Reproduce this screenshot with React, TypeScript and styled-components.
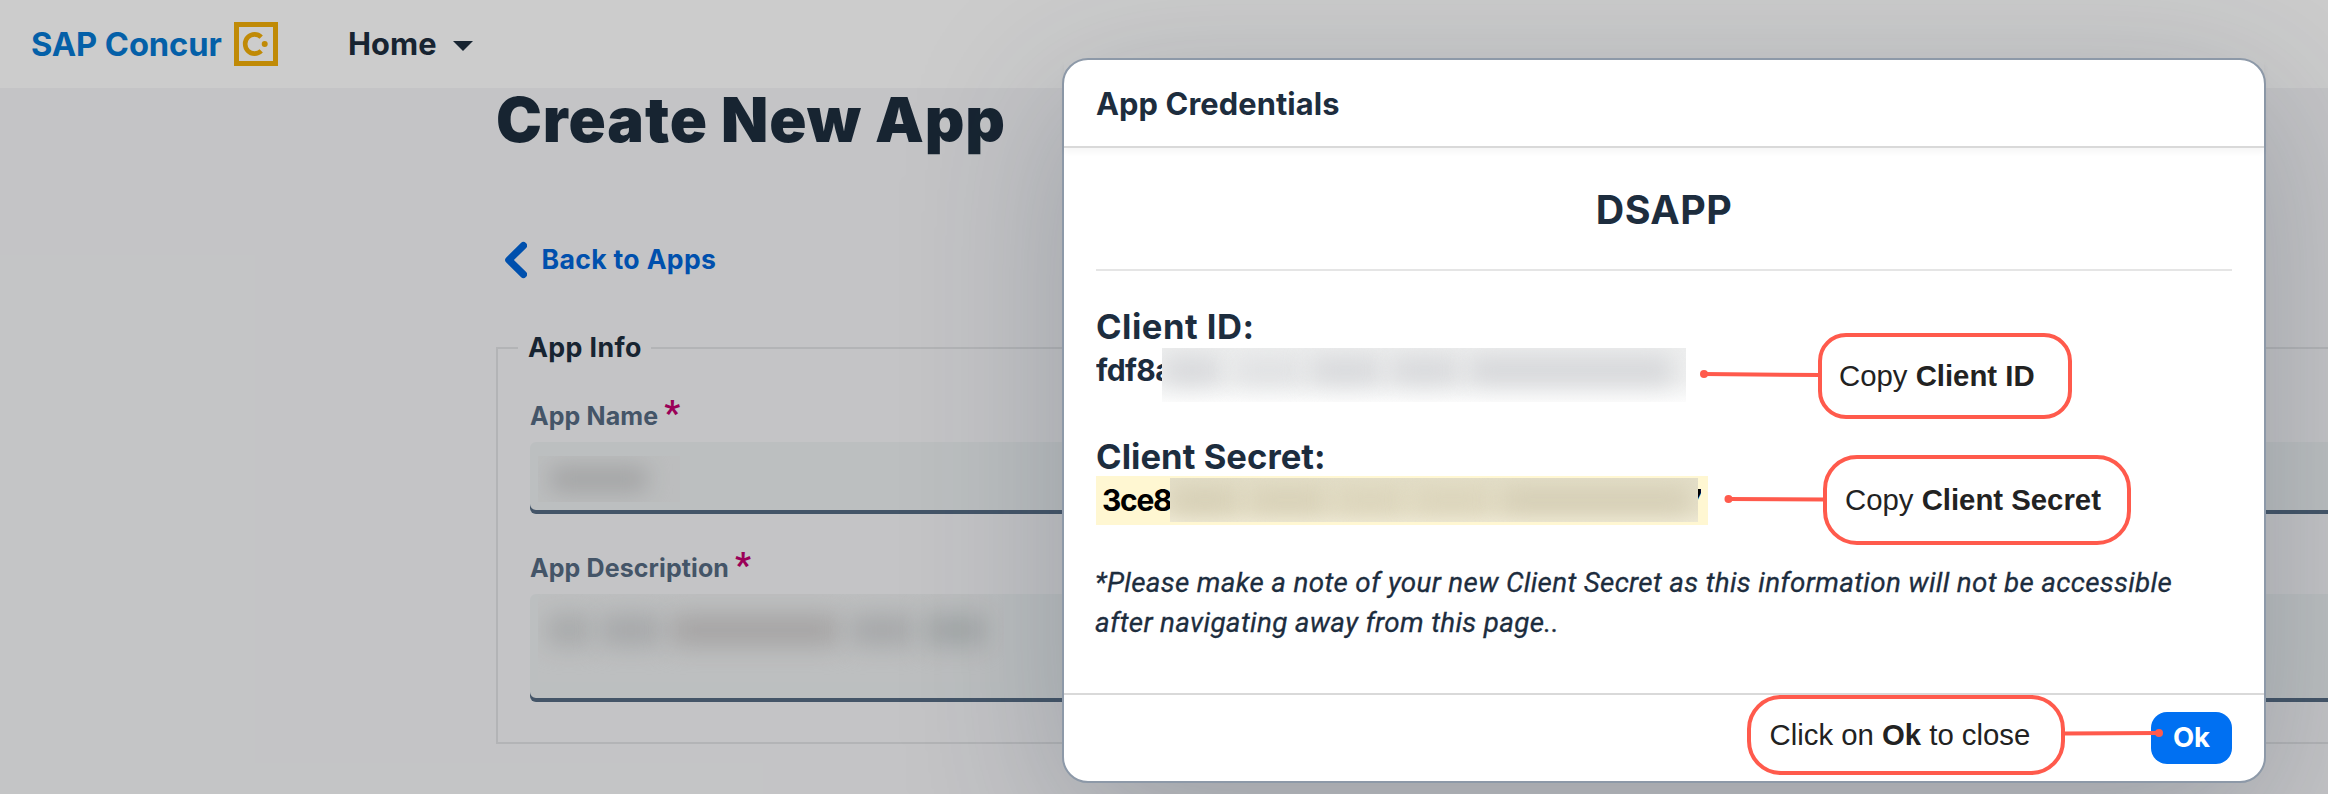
import React from 'react';
import styled, { createGlobalStyle } from 'styled-components';

const GlobalStyle = createGlobalStyle`
  * { box-sizing: border-box; }
  body {
    margin: 0;
    font-family: Inter, "Noto Sans", sans-serif;
    color: #1d2d3e;
    overflow: hidden;
  }
`;

const Page = styled.div`
  position: relative;
  width: 2328px;
  height: 794px;
  overflow: hidden;
  background: #f5f6f8;
  white-space: nowrap;
`;

/* ---------- top bar ---------- */

const TopBar = styled.header`
  display: flex;
  align-items: center;
  height: 88px;
  padding-left: 31px;
  background: #fff;
`;

const Brand = styled.div`
  width: 203px;
  font-size: 32.7px;
  font-weight: 700;
  line-height: 40px;
  letter-spacing: -0.1px;
  color: #0578d3;
`;

const BrandMark = styled.svg`
  display: block;
  width: 44px;
  height: 44px;
`;

const HomeMenu = styled.div`
  display: flex;
  align-items: center;
  gap: 16px;
  margin-left: 70px;
  font-size: 30.8px;
  font-weight: 700;
  line-height: 40px;
  letter-spacing: 0.1px;

  svg {
    display: block;
    margin-top: 4px;
  }
`;

/* ---------- page content ---------- */

const Main = styled.main`
  display: flex;
  flex-direction: column;
  width: 2000px;
  margin-left: 496px;
`;

const PageTitle = styled.h1`
  margin: 0 0 91.5px 0;
  padding-top: 2.5px;
  font-size: 61.5px;
  font-weight: 900;
  line-height: 58px;
  letter-spacing: 0.9px;
`;

const BackLink = styled.a`
  display: flex;
  align-items: flex-start;
  gap: 14.5px;
  height: 40px;
  padding-left: 8px;
  margin-bottom: 67px;
  font-size: 26.6px;
  font-weight: 700;
  line-height: 38px;
  letter-spacing: 0.33px;
  color: #0064d9;

  svg {
    display: block;
  }
`;

const LegendRow = styled.div`
  display: flex;
  align-items: center;
  height: 2px;
`;

const Rule = styled.div<{ $width?: number }>`
  height: 2px;
  background: #e0e2e4;
  ${p => (p.$width ? `width: ${p.$width}px;` : 'flex: 1;')}
`;

const Legend = styled.div`
  width: 133px;
  padding: 0 0 2px 10px;
  font-size: 26.8px;
  font-weight: 700;
  line-height: 40px;
  letter-spacing: 0.35px;
`;

const FieldGroup = styled.section`
  display: flex;
  flex-direction: column;
  height: 395px;
  padding: 46px 0 0 32px;
  border-left: 2px solid #e0e2e4;
  border-bottom: 2px solid #e0e2e4;
`;

const Label = styled.label`
  display: flex;
  align-items: baseline;
  gap: 6px;
  height: 40px;
  margin-bottom: 7px;
  font-size: 25px;
  font-weight: 700;
  line-height: 43px;
  letter-spacing: 0.1px;
  color: #556b82;
`;

const Required = styled.span`
  font-family: Roboto, sans-serif;
  font-size: 35px;
  font-weight: 700;
  line-height: 20px;
  color: #c2006e;
`;

const Input = styled.div<{ $height: number; $pad: string }>`
  height: ${p => p.$height}px;
  padding: ${p => p.$pad};
  margin-bottom: 33px;
  border-radius: 6px;
  background: #eceff1;
  box-shadow: inset 0 -4px 0 #556b82;
`;

/* ---------- blurred-out values ---------- */

const Redacted = styled.div<{ $width: number; $height: number; $bg: string; $pad: string }>`
  flex: none;
  display: flex;
  width: ${p => p.$width}px;
  height: ${p => p.$height}px;
  padding: ${p => p.$pad};
  overflow: hidden;
  background: ${p => p.$bg};
`;

const Smudge = styled.div<{ $width: number; $color: string; $blur: number; $gap?: number }>`
  flex: none;
  width: ${p => p.$width}px;
  height: 100%;
  margin-right: ${p => p.$gap ?? 0}px;
  border-radius: 8px;
  background: ${p => p.$color};
  filter: blur(${p => p.$blur}px);
`;

const Backdrop = styled.div`
  position: absolute;
  inset: 0;
  background: rgba(0, 0, 0, 0.2);
`;

/* ---------- dialog ---------- */

const Dialog = styled.div`
  position: absolute;
  left: 1062px;
  top: 58px;
  display: flex;
  flex-direction: column;
  width: 1204px;
  height: 725px;
  border: 2px solid #8d99a8;
  border-radius: 26px;
  background: #fff;
  box-shadow: 0 40px 155px rgba(34, 53, 72, 0.25);
`;

const DialogHeader = styled.div`
  height: 88px;
  padding-left: 32px;
  border-bottom: 2px solid #d9d9d9;
  box-shadow: 0 4px 6px rgba(0, 0, 0, 0.04);
  font-size: 30.8px;
  font-weight: 700;
  line-height: 87px;
  letter-spacing: 0.1px;
`;

const DialogBody = styled.div`
  display: flex;
  flex-direction: column;
  height: 545px;
  padding: 37px 32px 0;
`;

const AppName = styled.h2`
  margin: 0;
  padding-bottom: 34px;
  border-bottom: 2px solid #e5e5e5;
  font-size: 39.4px;
  font-weight: 700;
  line-height: 50px;
  letter-spacing: 0.5px;
  text-align: center;
`;

const FieldTitle = styled.h3<{ $top: number; $line: number; $spacing: number }>`
  margin: ${p => p.$top}px 0 0;
  font-size: 34.6px;
  font-weight: 700;
  line-height: ${p => p.$line}px;
  letter-spacing: ${p => p.$spacing}px;
`;

const ClientId = styled.div`
  display: flex;
  height: 54px;
  font-size: 30px;
  font-weight: 700;
  line-height: 44px;
  letter-spacing: -0.6px;
`;

const ClientSecret = styled.div`
  display: flex;
  width: 612px;
  height: 49px;
  padding-left: 6px;
  background: #fff7d2;
  color: #000;
  font-size: 30px;
  font-weight: 700;
  line-height: 48px;
  letter-spacing: -1.3px;
`;

const Clip = styled.span<{ $width: number; $end?: boolean }>`
  display: flex;
  justify-content: ${p => (p.$end ? 'flex-end' : 'flex-start')};
  flex: none;
  width: ${p => p.$width}px;
  overflow: hidden;
`;

const SecretMask = styled.div`
  padding-top: 2px;
`;

const Note = styled.p`
  margin: 37.5px 0 0 -1px;
  font-family: Roboto, "Noto Sans", sans-serif;
  font-size: 27.8px;
  font-style: italic;
  line-height: 40px;
  letter-spacing: 0.33px;
  -webkit-text-stroke: 0.3px #1d2d3e;
`;

const DialogFooter = styled.div`
  display: flex;
  justify-content: flex-end;
  flex: 1;
  padding: 17px 32px 0;
  border-top: 2px solid #d9d9d9;
`;

const OkButton = styled.button`
  width: 81px;
  height: 52px;
  padding: 0 0 2px;
  border: 0;
  border-radius: 16px;
  background: #0070f2;
  color: #fff;
  font-family: inherit;
  font-size: 27.5px;
  font-weight: 700;
  line-height: 50px;
`;

/* ---------- annotations ---------- */

const Callout = styled.div<{ $x: number; $y: number; $w: number; $h: number; $r: number; $pad: number }>`
  position: absolute;
  left: ${p => p.$x}px;
  top: ${p => p.$y}px;
  display: flex;
  align-items: center;
  width: ${p => p.$w}px;
  height: ${p => p.$h}px;
  padding-left: ${p => p.$pad}px;
  border: 4px solid #ff5a4c;
  border-radius: ${p => p.$r}px;
  background: #fff;
  color: #222;
  font-family: "Liberation Sans", Arial, sans-serif;
  font-size: 29.33px;
  white-space: pre;
`;

const Connectors = styled.svg`
  position: absolute;
  inset: 0;
`;

const Connector = ({ dot, end }: { dot: [number, number]; end: [number, number] }) => (
  <g stroke="#ff5a4c" fill="#ff5a4c">
    <line x1={dot[0]} y1={dot[1]} x2={end[0]} y2={end[1]} strokeWidth="4" />
    <circle cx={dot[0]} cy={dot[1]} r="4" stroke="none" />
  </g>
);

export default function App() {
  return (
    <Page>
      <GlobalStyle />
      <TopBar>
        <Brand>SAP Concur</Brand>
        <BrandMark viewBox="0 0 44 44" fill="none">
          <rect x="2.5" y="2.5" width="39" height="39" stroke="#f0ad08" strokeWidth="5" />
          <path d="M27.2 15.2 A9.4 9.6 0 1 0 27.2 28.8" stroke="#f0ad08" strokeWidth="4.6" />
          <circle cx="30.7" cy="22" r="3" fill="#f0ad08" />
        </BrandMark>
        <HomeMenu>
          Home
          <svg width="20" height="10" viewBox="0 0 20 10">
            <path d="M0 0H20L10 10Z" fill="#1d2d3e" />
          </svg>
        </HomeMenu>
      </TopBar>

      <Main>
        <PageTitle>Create New App</PageTitle>
        <BackLink>
          <svg width="23" height="40" viewBox="0 0 23 40" fill="none">
            <path d="M19.4 5.6L4.8 20L19.4 34.4" stroke="#0064d9" strokeWidth="7.2" strokeLinecap="round" strokeLinejoin="round" />
          </svg>
          Back to Apps
        </BackLink>
        <LegendRow>
          <Rule $width={22} />
          <Legend>App Info</Legend>
          <Rule />
        </LegendRow>
        <FieldGroup>
          <Label>App Name <Required>*</Required></Label>
          <Input $height={72} $pad="14px 8px">
            <Redacted $width={142} $height={46} $bg="#ebedee" $pad="10px 12px">
              <Smudge $width={98} $color="#cdcecf" $blur={11} />
            </Redacted>
          </Input>
          <Label>App Description <Required>*</Required></Label>
          <Input $height={108} $pad="0 8px">
            <Redacted $width={466} $height={88} $bg="#edeff0" $pad="20px 8px 36px">
              <Smudge $width={46} $color="#d2d4d5" $blur={12} $gap={8} />
              <Smudge $width={62} $color="#d0d2d4" $blur={12} $gap={8} />
              <Smudge $width={170} $color="#cfcdcd" $blur={12} $gap={10} />
              <Smudge $width={64} $color="#d0d2d4" $blur={12} $gap={10} />
              <Smudge $width={62} $color="#ccd1d2" $blur={12} />
            </Redacted>
          </Input>
        </FieldGroup>
      </Main>

      <Backdrop />

      <Dialog>
        <DialogHeader>App Credentials</DialogHeader>
        <DialogBody>
          <AppName>DSAPP</AppName>
          <FieldTitle $top={33} $line={44} $spacing={0.5}>Client ID:</FieldTitle>
          <ClientId>
            <Clip $width={66}>fdf8a</Clip>
            <Redacted $width={524} $height={54} $bg="linear-gradient(#eeefef, #f0f1f1 60%, #fcfcfc)" $pad="8px 10px 18px 0">
              <Smudge $width={60} $color="#d6d7da" $blur={12} $gap={12} />
              <Smudge $width={70} $color="#dfe0e2" $blur={12} $gap={6} />
              <Smudge $width={72} $color="#d6d7da" $blur={12} $gap={8} />
              <Smudge $width={70} $color="#d6d7da" $blur={12} $gap={8} />
              <Smudge $width={206} $color="#d4d5d8" $blur={12} />
            </Redacted>
          </ClientId>
          <FieldTitle $top={35} $line={39} $spacing={0.05}>Client Secret:</FieldTitle>
          <ClientSecret>
            <Clip $width={68}>3ce8</Clip>
            <SecretMask>
              <Redacted $width={528} $height={44} $bg="linear-gradient(#e4dfc9, #e8e2cb 70%, #efead5)" $pad="10px 6px 10px 0">
                <Smudge $width={70} $color="#d3ccb2" $blur={12} $gap={8} />
                <Smudge $width={80} $color="#d5ceb4" $blur={12} $gap={6} />
                <Smudge $width={72} $color="#d9d2b8" $blur={12} $gap={6} />
                <Smudge $width={80} $color="#d9d2b8" $blur={12} $gap={8} />
                <Smudge $width={192} $color="#d2cbb2" $blur={12} />
              </Redacted>
            </SecretMask>
            <Clip $width={3} $end>7</Clip>
          </ClientSecret>
          <Note>
            *Please make a note of your new Client Secret as this information will not be accessible
            <br />
            after navigating away from this page..
          </Note>
        </DialogBody>
        <DialogFooter>
          <OkButton>Ok</OkButton>
        </DialogFooter>
      </Dialog>

      <Callout $x={1818} $y={333} $w={254} $h={86} $r={28} $pad={17}>Copy <b>Client ID</b></Callout>
      <Callout $x={1823} $y={455} $w={308} $h={90} $r={34} $pad={18}>Copy <b>Client Secret</b></Callout>
      <Callout $x={1747} $y={695} $w={318} $h={80} $r={34} $pad={18.5}>Click on <b>Ok</b> to close</Callout>
      <Connectors width="2328" height="794">
        <Connector dot={[1704, 374]} end={[1820, 375]} />
        <Connector dot={[1728.5, 499]} end={[1825, 499.5]} />
        <Connector dot={[2159, 733]} end={[2063, 733.6]} />
      </Connectors>
    </Page>
  );
}
